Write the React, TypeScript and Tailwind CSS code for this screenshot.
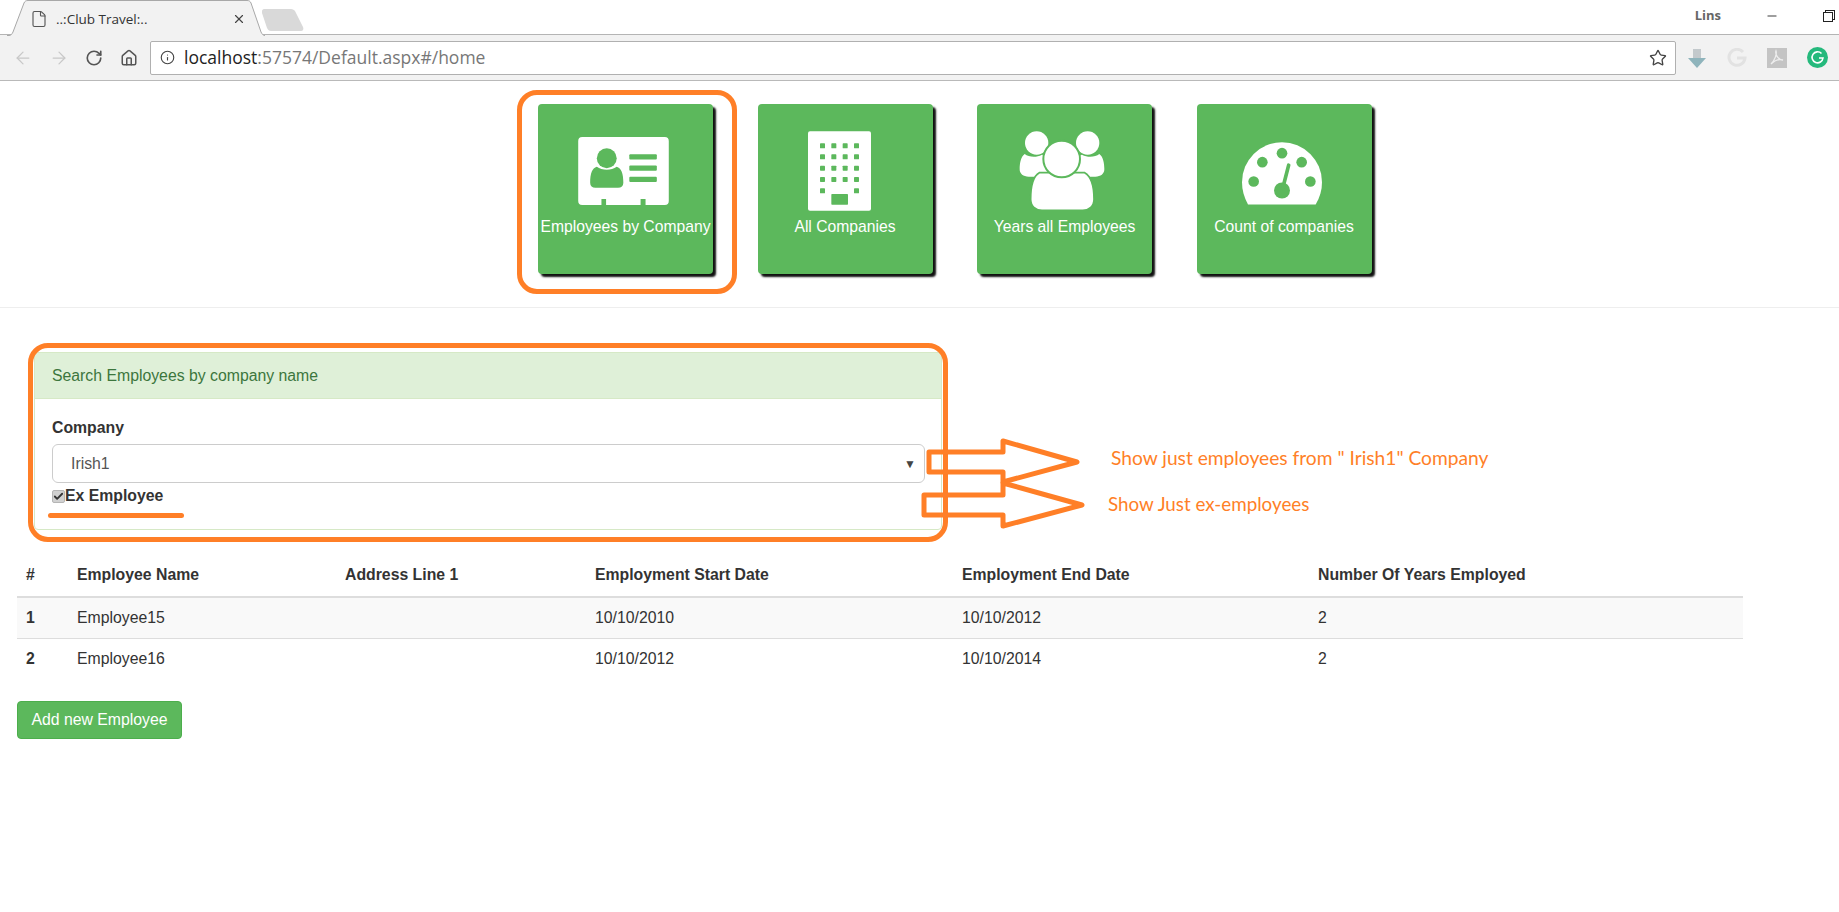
import React from 'react';
import { ArrowLeft, ArrowRight, RotateCw, House, Info, Star, X, File, Minus, Check } from 'lucide-react';

const GREEN = '#5cb85c';

const CardIcon = () => (
  <svg width="91" height="68" viewBox="234 170 273 205">
    <path d="M246 170H495a12 12 0 0 1 12 12V363a12 12 0 0 1-12 12H437V357H422V375H318V357H304V375H246a12 12 0 0 1-12-12V182a12 12 0 0 1 12-12Z" fill="#fff" />
    <circle cx="320" cy="234" r="30" fill={GREEN} />
    <path d="M290 260c16 12 44 12 60 0 14 4 20 20 20 48 0 10-6 15-16 15H286c-10 0-16-5-16-15 0-28 6-44 20-48Z" fill={GREEN} />
    <rect x="388" y="222" width="83" height="16" rx="3" fill={GREEN} />
    <rect x="388" y="256" width="83" height="16" rx="3" fill={GREEN} />
    <rect x="388" y="290" width="83" height="16" rx="3" fill={GREEN} />
  </svg>
);

const BuildingIcon = () => {
  const cols = [961, 995, 1029, 1063];
  const rows = [189, 222, 256, 290];
  return (
    <svg width="63" height="80" viewBox="925 153 189 238">
      <rect x="925" y="153" width="189" height="238" rx="6" fill="#fff" />
      {rows.map(r => cols.map(c => <rect key={`${r}-${c}`} x={c} y={r} width="15" height="15" rx="2" fill={GREEN} />))}
      <rect x="961" y="324" width="15" height="15" rx="2" fill={GREEN} />
      <rect x="1063" y="324" width="15" height="15" rx="2" fill={GREEN} />
      <rect x="995" y="341" width="50" height="32" rx="2" fill={GREEN} />
    </svg>
  );
};

const PeopleIcon = () => (
  <svg width="86" height="80" viewBox="207 122 258 240">
    <circle cx="260" cy="158" r="35" fill="#fff" />
    <circle cx="413" cy="158" r="35" fill="#fff" />
    <path d="M224 191c12 9 34 12 52 2l20 6v60h-60c-16 0-27-8-27-22 0-20 4-38 15-46Z" fill="#fff" />
    <path d="M448 191c-12 9-34 12-52 2l-20 6v60h60c16 0 27-8 27-22 0-20-4-38-15-46Z" fill="#fff" />
    <path d="M268 247H404c18 10 28 40 28 80 0 20-14 33-34 33H276c-20 0-34-13-34-33 0-40 8-70 26-80Z" fill="#fff" stroke={GREEN} strokeWidth="5" />
    <circle cx="335" cy="206" r="55" fill="#fff" stroke={GREEN} strokeWidth="6" />
  </svg>
);

const GaugeIcon = () => (
  <svg width="80" height="63" viewBox="874 157 240 188">
    <path d="M892 344C880 322 874 300 874 277A120 120 0 0 1 1114 277C1114 300 1108 322 1095 344Z" fill="#fff" />
    <circle cx="909" cy="275" r="16" fill={GREEN} />
    <circle cx="935" cy="217" r="16" fill={GREEN} />
    <circle cx="994" cy="190" r="16" fill={GREEN} />
    <circle cx="1053" cy="217" r="16" fill={GREEN} />
    <circle cx="1079" cy="275" r="16" fill={GREEN} />
    <circle cx="994" cy="302" r="24" fill={GREEN} />
    <path d="M996 296L1014 226" stroke={GREEN} strokeWidth="11" strokeLinecap="round" />
  </svg>
);

const TILES = [
  { label: 'Employees by Company', icon: <CardIcon />, shift: 'mr-[4px]' },
  { label: 'All Companies', icon: <BuildingIcon />, shift: 'mr-[12px]' },
  { label: 'Years all Employees', icon: <PeopleIcon />, shift: 'mr-[6px]' },
  { label: 'Count of companies', icon: <GaugeIcon />, shift: 'mr-[4px] pt-[5px]' },
];

const ROWS = [
  { id: 1, name: 'Employee15', start: '10/10/2010', end: '10/10/2012', years: 2 },
  { id: 2, name: 'Employee16', start: '10/10/2012', end: '10/10/2014', years: 2 },
];

const BrowserChrome = () => (
  <div className="relative">
    <div className="h-[35px] bg-white flex items-start border-b border-[#b4b4b4] relative">
      <svg className="absolute left-[7px] top-0" width="258" height="36" viewBox="0 0 258 36">
        <path d="M0 35.5H2C4 35.5 5 34 6 32L17 3C18 1 19 .5 21 .5H240C242 .5 243 1 244 3L254 32C255 34 256 35.5 258 35.5" fill="#f2f2f2" stroke="#a8a8a8" />
      </svg>
      <svg className="absolute left-[261px] top-[9px]" width="44" height="22" viewBox="0 0 44 22">
        <path d="M1 2C1 1 2 0 3 0H30C32 0 33 1 34 2L42 18C43 20 42 22 40 22H10C8 22 7 21 6 19L1 4Z" fill="#d9d9d9" />
      </svg>
      <div className="relative ml-[30px] mt-[10px] h-[18px] w-[216px] flex items-center">
        <File size={18} strokeWidth={1.5} className="text-[#555]" />
        <span className="ml-[8px] text-[13.5px] leading-[18px] text-[#333] font-['Open_Sans',sans-serif] flex-1">..:Club Travel:..</span>
        <X size={14} strokeWidth={2} className="text-[#444]" />
      </div>
      <div className="ml-auto flex items-center h-[35px] pb-[4px]">
        <span className="text-[13px] font-bold text-[#666] font-['Open_Sans',sans-serif] mr-[44px]">Lins</span>
        <Minus size={14} strokeWidth={1.4} className="text-[#111] mr-[44px]" />
        <svg width="12" height="12" viewBox="0 0 12 12" className="mr-[4px]" fill="#fff" stroke="#222">
          <rect x="2.5" y=".5" width="9" height="9" />
          <rect x=".5" y="2.5" width="9" height="9" />
        </svg>
      </div>
    </div>
    <div className="h-[46px] bg-[#f2f2f2] border-b border-[#b9b9b9] flex items-center pl-[13px]">
      <ArrowLeft size={20} strokeWidth={1.5} className="text-[#c8c8c8]" />
      <ArrowRight size={20} strokeWidth={1.5} className="text-[#c8c8c8] ml-[16px]" />
      <RotateCw size={18} strokeWidth={2.2} className="text-[#555] ml-[16px]" />
      <House size={18} strokeWidth={2} className="text-[#555] ml-[17px]" />
      <div className="ml-[12px] w-[1526px] h-[34px] bg-white border border-[#b0b0b0] rounded-[2px] flex items-center pl-[9px] pr-[8px]">
        <Info size={15} strokeWidth={1.8} className="text-[#444]" />
        <span className="ml-[9px] text-[17.5px] text-[#777] font-['Open_Sans',sans-serif] flex-1">
          <span className="text-[#222]">localhost</span>:57574/Default.aspx#/home
        </span>
        <Star size={18} strokeWidth={1.8} className="text-[#444]" />
      </div>
      <div className="flex items-center ml-[11px] gap-[20px]">
        <svg width="20" height="20" viewBox="0 0 20 20">
          <path d="M6 1H14V10H19L10 20L1 10H6Z" fill="#8fb4bc" />
          <path d="M6 1H14V10H6Z" fill="#c3c9cc" />
        </svg>
        <svg width="20" height="20" viewBox="0 0 20 20" fill="none">
          <path d="M16 4A8 8 0 1 0 18 10H10" stroke="#e2e2e2" strokeWidth="3" />
        </svg>
        <svg width="20" height="20" viewBox="0 0 20 20">
          <rect width="20" height="20" fill="#c4c4c4" />
          <path d="M4 16C8 12 10 6 9 3C8 6 11 12 16 12C12 11 7 13 4 16Z" fill="none" stroke="#eee" strokeWidth="1.3" />
        </svg>
        <svg width="21" height="21" viewBox="0 0 21 21" fill="none">
          <circle cx="10.5" cy="10.5" r="10.5" fill="#25b97c" />
          <path d="M14.5 6.5A5.5 5.5 0 1 0 16 11H12" stroke="#fff" strokeWidth="1.6" />
        </svg>
      </div>
    </div>
  </div>
);

export default function App() {
  return (
    <div className="relative min-h-[912px] bg-white text-[15.8px] text-[#333] font-['Liberation_Sans',Arial,sans-serif] overflow-hidden">
      <BrowserChrome />

      <div className="flex gap-[44.5px] pl-[538px] pt-[23px] pb-[33px] border-b border-[#eeeeee]">
        {TILES.map(t => (
          <div key={t.label} className="w-[175px] h-[170px] rounded-[4px] bg-[#5cb85c] text-white flex flex-col items-center shadow-[3px_3px_2px_#111]">
            <div className={`mt-[27px] h-[80px] flex items-center justify-center ${t.shift}`}>{t.icon}</div>
            <div className="mt-[6px] text-[15.7px] leading-[20px] whitespace-nowrap">{t.label}</div>
          </div>
        ))}
      </div>

      <div className="ml-[34px] mt-[44px] w-[908px] h-[178px] border border-[#d6e9c6] rounded-[4px] overflow-hidden">
        <div className="h-[46px] bg-[#dff0d8] border-b border-[#d6e9c6] text-[#3c763d] pl-[17px] leading-[46px]">
          Search Employees by company name
        </div>
        <div className="pl-[17px] pr-[16px] pt-[18px]">
          <div className="font-bold leading-[22px]">Company</div>
          <div className="mt-[5px] h-[39px] border border-[#cccccc] rounded-[6px] flex items-center justify-between pl-[18px] pr-[8px] text-[#555]">
            <span>Irish1</span>
            <span className="text-[12px] text-[#444]">▼</span>
          </div>
          <label className="mt-[2px] flex items-center font-bold leading-[22px]">
            <span className="w-[13px] h-[13px] rounded-[2px] bg-[#d0d0d0] border border-[#b5b5b5] flex items-center justify-center">
              <Check size={11} strokeWidth={4} className="text-[#333]" />
            </span>
            Ex Employee
          </label>
        </div>
      </div>

      <table className="ml-[17px] mt-[23px] w-[1726px] table-fixed border-collapse">
        <colgroup>
          <col className="w-[51px]" />
          <col className="w-[268px]" />
          <col className="w-[250px]" />
          <col className="w-[367px]" />
          <col className="w-[356px]" />
          <col />
        </colgroup>
        <thead>
          <tr className="border-b-2 border-[#dddddd] text-left">
            <th className="px-[9px] h-[44px]">#</th>
            <th className="px-[9px]">Employee Name</th>
            <th className="px-[9px]">Address Line 1</th>
            <th className="px-[9px]">Employment Start Date</th>
            <th className="px-[9px]">Employment End Date</th>
            <th className="px-[9px]">Number Of Years Employed</th>
          </tr>
        </thead>
        <tbody>
          {ROWS.map((r, i) => (
            <tr key={r.id} className={i === 0 ? 'bg-[#f9f9f9] border-b border-[#dddddd]' : ''}>
              <td className="px-[9px] h-[41px] font-bold">{r.id}</td>
              <td className="px-[9px]">{r.name}</td>
              <td className="px-[9px]"></td>
              <td className="px-[9px]">{r.start}</td>
              <td className="px-[9px]">{r.end}</td>
              <td className="px-[9px]">{r.years}</td>
            </tr>
          ))}
        </tbody>
      </table>

      <button className="block ml-[17px] mt-[22px] w-[165px] h-[38px] rounded-[4px] bg-[#5cb85c] border border-[#4cae4c] text-white">
        Add new Employee
      </button>

      {/* orange annotations drawn over the page */}
      <div className="absolute left-[517px] top-[90px] w-[220px] h-[204px] border-[5px] border-[#ff7f27] rounded-[20px]" />
      <div className="absolute left-[28px] top-[343px] w-[920px] h-[199px] border-[5px] border-[#ff7f27] rounded-[20px]" />
      <div className="absolute left-[48px] top-[513px] w-[136px] h-[5px] rounded-full bg-[#ff7f27]" />
      <svg className="absolute left-[920px] top-[436px]" width="170" height="125" viewBox="920 436 170 125" fill="none" stroke="#ff7f27" strokeWidth="5" strokeLinejoin="round">
        <path d="M1003 452H929V472H1003V482L1077 462L1003 441Z" />
        <path d="M1003 495H924V515H1003V526L1082 505L1003 483Z" />
      </svg>
      <div className="absolute left-[1111px] top-[446px] text-[19.2px] leading-[24px] text-[#ff7f27] font-['Lato',sans-serif] whitespace-nowrap">Show just employees from " Irish1" Company</div>
      <div className="absolute left-[1108px] top-[492px] text-[18.8px] leading-[24px] text-[#ff7f27] font-['Lato',sans-serif] whitespace-nowrap">Show Just ex-employees</div>
    </div>
  );
}
